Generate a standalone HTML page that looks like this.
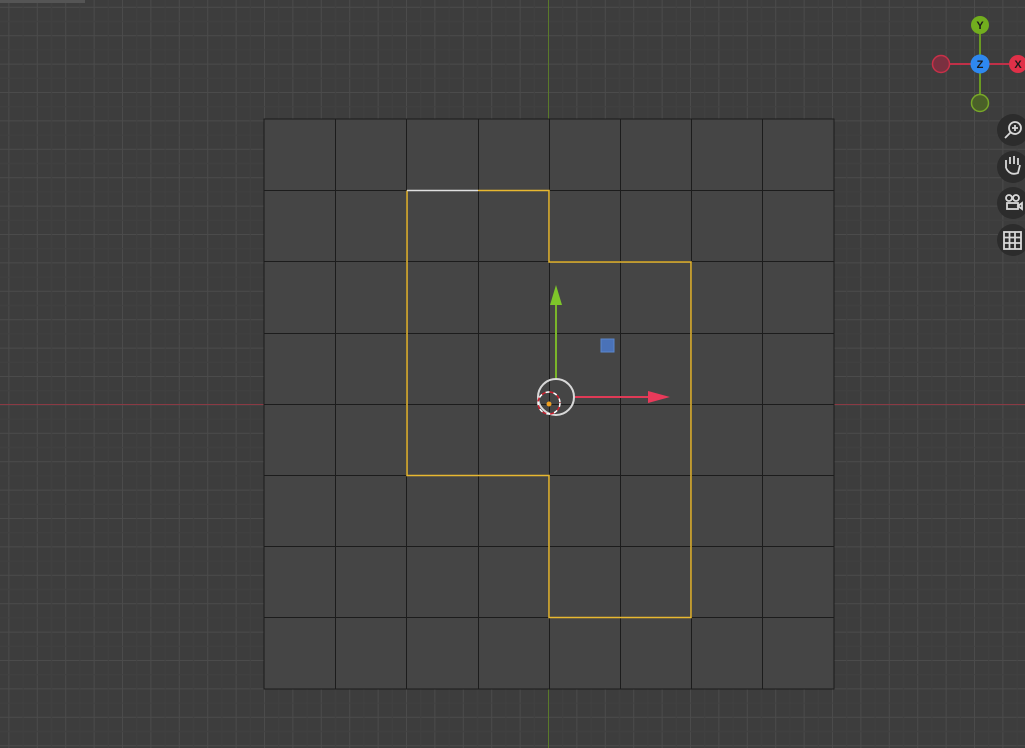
<!DOCTYPE html>
<html><head><style>
html,body{margin:0;padding:0;width:1025px;height:748px;overflow:hidden;background:#3d3d3d}
</style></head><body>
<svg width="1025" height="748" viewBox="0 0 1025 748" xmlns="http://www.w3.org/2000/svg" style="display:block">
<defs>
<pattern id="g" x="-20" y="6.8" width="28.4" height="28.4" patternUnits="userSpaceOnUse">
<rect width="28.4" height="28.4" fill="#3d3d3d"/>
<path d="M0 0.5H28.4M0.5 0V28.4" stroke="#4b4b4b" stroke-width="1"/>
<path d="M0 14.7H28.4M14.7 0V28.4" stroke="#404040" stroke-width="1"/>
</pattern>
</defs>
<rect width="1025" height="748" fill="url(#g)"/>
<rect x="0" y="0" width="85" height="3" fill="#555"/>
<line x1="0" y1="404.5" x2="1025" y2="404.5" stroke="#8a3a44" stroke-width="1"/>
<line x1="548.5" y1="0" x2="548.5" y2="748" stroke="#5a7a2a" stroke-width="1"/>
<rect x="264" y="119" width="570" height="570" fill="#454545" stroke="#1c1c1c"/>
<g stroke="#1c1c1c" stroke-width="1">
<path d="M335.5 119V689M406.5 119V689M478.5 119V689M549.5 119V689M620.5 119V689M691.5 119V689M762.5 119V689"/>
<path d="M264 190.5H834M264 261.5H834M264 333.5H834M264 404.5H834M264 475.5H834M264 546.5H834M264 617.5H834"/>
</g>
<path d="M478 190.5H549V262H691V617.5H549V475.5H407V190.5" fill="none" stroke="#e8b830" stroke-width="1.5"/>
<line x1="407" y1="190.5" x2="478" y2="190.5" stroke="#e0e0e0" stroke-width="1.5"/>
<rect x="601" y="339" width="13" height="13" fill="#4a72b8" stroke="#5a86cc"/>
<line x1="556" y1="379" x2="556" y2="303" stroke="#7ab52a" stroke-width="2"/>
<path d="M556 285L550 305H562Z" fill="#7ec62a"/>
<line x1="575" y1="397" x2="650" y2="397" stroke="#e03a56" stroke-width="2"/>
<path d="M670 397L648 391V403Z" fill="#e83a5a"/>
<circle cx="556" cy="397" r="18" fill="none" stroke="#d8d8d8" stroke-width="2"/>
<circle cx="549" cy="403" r="11" fill="none" stroke="#fff" stroke-width="1.5" stroke-dasharray="4 4"/>
<circle cx="549" cy="403" r="11" fill="none" stroke="#d02030" stroke-width="1.5" stroke-dasharray="4 4" stroke-dashoffset="4"/>
<circle cx="549" cy="404" r="2.5" fill="#f0a020"/>
<line x1="950" y1="64" x2="1018" y2="64" stroke="#c03048" stroke-width="2"/>
<line x1="980" y1="25" x2="980" y2="94" stroke="#6a9a22" stroke-width="2"/>
<circle cx="941" cy="64" r="8.5" fill="#7a3040" stroke="#c83048" stroke-width="1.5"/>
<circle cx="980" cy="103" r="8.5" fill="#4a6028" stroke="#78a828" stroke-width="1.5"/>
<circle cx="980" cy="25" r="9" fill="#72ae1e"/>
<circle cx="980" cy="64" r="9.5" fill="#2e88f0"/>
<circle cx="1018" cy="64" r="9" fill="#e03048"/>
<g font-family="Liberation Sans, sans-serif" font-weight="bold" font-size="11" text-anchor="middle" fill="#1a1a1a">
<text x="980" y="29">Y</text><text x="980" y="68">Z</text><text x="1018" y="68">X</text>
</g>
<g fill="#2c2c2c">
<circle cx="1013" cy="130" r="16"/><circle cx="1013" cy="167" r="16"/>
<circle cx="1013" cy="203" r="16"/><circle cx="1013" cy="240" r="16"/>
</g>
<g stroke="#d8d8d8" fill="none" stroke-width="1.8">
<circle cx="1015" cy="128" r="6"/><path d="M1011 132L1005 138"/><path d="M1015 125V131M1012 128H1018"/>
<path d="M1006 168V160M1010 164V157M1014 164V156M1018 165V158M1006 168Q1010 176 1018 173L1020 165"/>
<circle cx="1009" cy="198" r="3"/><circle cx="1016" cy="198" r="3"/><rect x="1007" y="203" width="11" height="6"/><path d="M1018 206L1022 203V209Z"/>
<rect x="1004" y="232" width="17" height="17"/><path d="M1004 237.5H1021M1004 243H1021M1009.5 232V249M1015 232V249"/>
</g>
</svg>
</body></html>
